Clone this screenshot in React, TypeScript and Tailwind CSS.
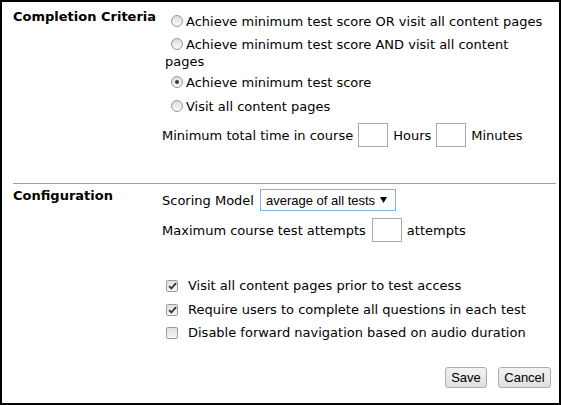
import React from "react";

function Radio({ checked = false }: { checked?: boolean }) {
  return (
    <span className="relative inline-block w-[12px] h-[12px] ml-[6px] mr-[3px] align-[-1px] rounded-full border border-[#979797] bg-gradient-to-b from-[#dcdcdc] to-[#fbfbfb]">
      {checked && (
        <span className="absolute left-[3px] top-[3px] w-[4px] h-[4px] rounded-full bg-[#3b3b3b]" />
      )}
    </span>
  );
}

function Check({ checked = false }: { checked?: boolean }) {
  return (
    <span className="relative inline-flex items-center justify-center w-[12px] h-[12px] ml-[4px] mr-[10px] rounded-[2px] border border-[#9b9b9b] bg-gradient-to-b from-[#e0e0e0] to-[#f7f7f7] shrink-0">
      {checked && (
        <svg width="9" height="8" viewBox="0 0 9 8">
          <path d="M1 4.2 L3.3 6.5 L8 1.2" stroke="#333" strokeWidth="1.8" fill="none" />
        </svg>
      )}
    </span>
  );
}

function Box({ className = "" }: { className?: string }) {
  return <span className={"inline-block w-[30px] h-[24px] border border-[#a9a9a9] bg-white " + className} />;
}

export default function App() {
  return (
    <div className="w-[561px] h-[405px] box-border border-2 border-black bg-white text-[13px] leading-[17px] text-black font-[Verdana,'DejaVu_Sans',sans-serif] flex flex-col">
      {/* Completion Criteria */}
      <div className="flex pl-[11px] pt-[6px]">
        <div className="w-[149px] font-bold shrink-0">Completion Criteria</div>
        <div className="w-[386px] pt-[5px]">
          <div className="pl-[3px]">
            <Radio />Achieve minimum test score OR visit all content pages
          </div>
          <div className="pl-[3px] mt-[6px]">
            <Radio />Achieve minimum test score AND visit all content pages
          </div>
          <div className="pl-[3px] mt-[4px]">
            <Radio checked />Achieve minimum test score
          </div>
          <div className="pl-[3px] mt-[7px]">
            <Radio />Visit all content pages
          </div>
          <div className="flex items-center mt-[8px] h-[24px]">
            <span>Minimum total time in course</span>
            <Box className="mx-[5px]" />
            <span>Hours</span>
            <Box className="mx-[5px]" />
            <span>Minutes</span>
          </div>
        </div>
      </div>

      <div className="ml-[11px] w-[543px] h-px bg-[#a0a0a0] mt-[36px]" />

      {/* Configuration */}
      <div className="flex pl-[11px] pt-[3px]">
        <div className="w-[149px] font-bold shrink-0">Configuration</div>
        <div className="pt-[2px]">
          <div className="flex items-center h-[22px]">
            <span>Scoring Model</span>
            <div className="ml-[6px] w-[136px] h-[22px] border border-[#7eb4ea] bg-white flex items-center justify-between pl-[5px] pr-[8px] font-['Liberation_Sans',Arial,sans-serif] text-[13px]">
              <span>average of all tests</span>
              <svg width="7" height="6" viewBox="0 0 7 6">
                <path d="M0 0 L7 0 L3.5 6 Z" fill="#000" />
              </svg>
            </div>
          </div>
          <div className="flex items-center mt-[7px] h-[24px]">
            <span>Maximum course test attempts</span>
            <Box className="ml-[6px] mr-[5px]" />
            <span>attempts</span>
          </div>
          <div className="flex items-center mt-[35px]">
            <Check checked />
            <span>Visit all content pages prior to test access</span>
          </div>
          <div className="flex items-center mt-[7px]">
            <Check checked />
            <span>Require users to complete all questions in each test</span>
          </div>
          <div className="flex items-center mt-[6px]">
            <Check />
            <span>Disable forward navigation based on audio duration</span>
          </div>
        </div>
      </div>

      <div className="flex justify-end pr-[8px] mt-[26px] gap-[11px] font-['Liberation_Sans',Arial,sans-serif] text-[13px]">
        <button className="h-[21px] w-[42px] border border-[#acacac] rounded-[3px] bg-gradient-to-b from-[#f2f2f2] to-[#e0e0e0] text-black leading-none">
          Save
        </button>
        <button className="h-[21px] w-[53px] border border-[#acacac] rounded-[3px] bg-gradient-to-b from-[#f2f2f2] to-[#e0e0e0] text-black leading-none">
          Cancel
        </button>
      </div>
    </div>
  );
}
